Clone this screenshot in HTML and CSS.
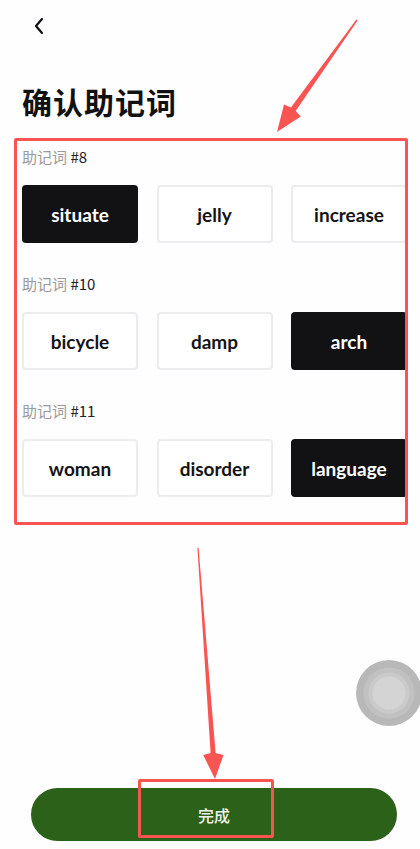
FILE: index.html
```html
<!DOCTYPE html>
<html lang="zh-CN">
<head>
<meta charset="utf-8">
<title>确认助记词</title>
<link rel="stylesheet" href="styles.css">
</head>
<body>
<div class="screen">
  <header class="topbar">
    <button class="back" aria-label="返回">
      <svg width="12" height="18" viewBox="0 0 12 18"><path d="M9 2 L3 9 L9 16" fill="none" stroke="#111" stroke-width="2.2" stroke-linecap="round" stroke-linejoin="round"/></svg>
    </button>
  </header>

  <h1 class="title">确认助记词</h1>

  <section class="quiz">
    <div class="group">
      <div class="label"><span class="muted">助记词</span> #8</div>
      <div class="choices">
        <div class="choice selected">situate</div>
        <div class="choice">jelly</div>
        <div class="choice">increase</div>
      </div>
    </div>
    <div class="group">
      <div class="label"><span class="muted">助记词</span> #10</div>
      <div class="choices">
        <div class="choice">bicycle</div>
        <div class="choice">damp</div>
        <div class="choice selected">arch</div>
      </div>
    </div>
    <div class="group">
      <div class="label"><span class="muted">助记词</span> #11</div>
      <div class="choices">
        <div class="choice">woman</div>
        <div class="choice">disorder</div>
        <div class="choice selected">language</div>
      </div>
    </div>
  </section>

  <button class="done">完成</button>

  <div class="fab"></div>
  <div class="mark-done"></div>
  <svg class="arrows" width="420" height="849" viewBox="0 0 420 849">
    <polygon fill="#f85552" points="357.6,20.4 295.7,111.0 300.8,116.5 277,132 284.0,104.5 290.9,107.5 356.4,19.6"/>
    <polygon fill="#f85552" points="198.6,548 215.6,753 223.5,755 215,779 203.2,755 210.6,753 197.4,548"/>
  </svg>
</div>
</body>
</html>
```

FILE: styles.css
```css
* { box-sizing: border-box; }

html, body {
  margin: 0;
  padding: 0;
  background: #fefdff;
}

body {
  font-family: "Noto Sans CJK SC", "Noto Sans", sans-serif;
  color: #111;
}

.screen {
  position: relative;
  width: 420px;
  height: 849px;
  display: flex;
  flex-direction: column;
  overflow: hidden;
}

.topbar {
  height: 52px;
  display: flex;
  align-items: center;
  padding-left: 32px;
}

.back {
  border: 0;
  background: none;
  padding: 0;
  width: 14px;
  height: 20px;
  display: flex;
  align-items: center;
  justify-content: center;
}

.title {
  margin: 31px 0 0 22px;
  font-size: 30px;
  line-height: 36px;
  font-weight: 700;
  color: #111;
  letter-spacing: 1px;
}

.quiz {
  margin: 19px 0 0 14px;
  width: 394px;
  border: 3px solid #f85552;
  border-radius: 2px;
  padding: 6px 0 25px 5px;
  overflow: hidden;
}

.group + .group {
  margin-top: 31px;
}

.label {
  font-size: 15px;
  line-height: 20px;
  color: #222;
  font-family: "Noto Sans CJK SC", "Noto Sans", sans-serif;
}

.label .muted {
  color: #9a9a9a;
}

.choices {
  margin-top: 18px;
  display: grid;
  grid-template-columns: 116px 116px 116px;
  column-gap: 18.5px;
}

.choice {
  height: 58px;
  border: 2px solid #ececee;
  border-radius: 4px;
  background: #fff;
  display: flex;
  align-items: center;
  justify-content: center;
  font-family: Lato, "Noto Sans", sans-serif;
  font-weight: 700;
  font-size: 19px;
  color: #141414;
}

.choice.selected {
  background: #121114;
  border-color: #121114;
  color: #fff;
}

.done {
  margin: auto 0 8px 31px;
  width: 366px;
  height: 53px;
  border: 0;
  border-radius: 27px;
  background: #2b6118;
  color: #eef2ea;
  font-family: "Noto Sans CJK SC", sans-serif;
  font-size: 16px;
  font-weight: 500;
}

.fab {
  position: absolute;
  left: 356px;
  top: 660px;
  width: 66px;
  height: 66px;
  border-radius: 50%;
  background: radial-gradient(circle, #d4d4d4 0 16px, #cacaca 17px 20px, #c1c1c1 21px 25px, #b8b8b8 26px);
}

.mark-done {
  position: absolute;
  left: 138px;
  top: 779px;
  width: 136px;
  height: 59px;
  border: 3px solid #f85552;
  border-radius: 2px;
}

.arrows {
  position: absolute;
  left: 0;
  top: 0;
  pointer-events: none;
}
```
